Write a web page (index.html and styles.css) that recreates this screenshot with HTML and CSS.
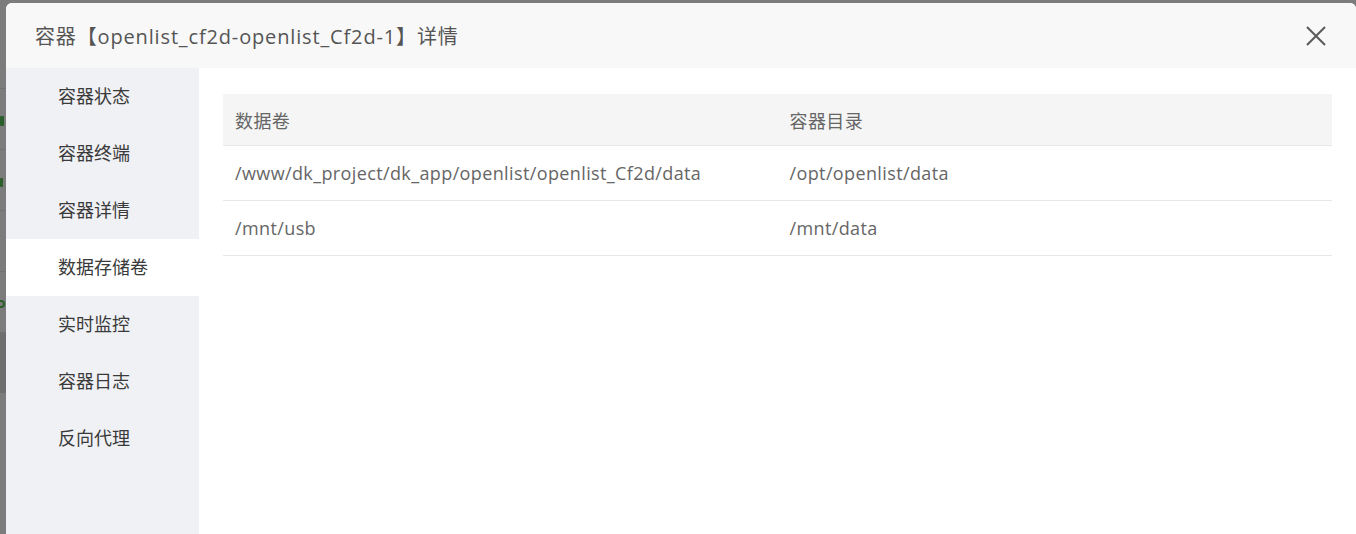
FILE: index.html
```html
<!DOCTYPE html>
<html lang="zh-CN">
<head>
<meta charset="utf-8">
<title>容器详情</title>
<link rel="stylesheet" href="styles.css">
</head>
<body>
<div class="backdrop">
  <div class="bg-row"><span class="bg-mark"></span></div>
  <div class="bg-row"><span class="bg-mark short"></span></div>
  <div class="bg-row"></div>
  <div class="bg-row"><span class="bg-mark round"></span></div>
  <div class="bg-row dark"></div>
</div>
<div class="modal">
  <div class="modal-header">
    <div class="modal-title">容器【openlist_cf2d-openlist_Cf2d-1】详情</div>
    <button class="modal-close" aria-label="关闭">
      <svg width="20" height="20" viewBox="0 0 20 20"><path d="M1 1 L19 19 M19 1 L1 19" stroke="#5a5a5a" stroke-width="2" fill="none"/></svg>
    </button>
  </div>
  <div class="modal-body">
    <ul class="side-menu">
      <li class="menu-item">容器状态</li>
      <li class="menu-item">容器终端</li>
      <li class="menu-item">容器详情</li>
      <li class="menu-item active">数据存储卷</li>
      <li class="menu-item">实时监控</li>
      <li class="menu-item">容器日志</li>
      <li class="menu-item">反向代理</li>
    </ul>
    <div class="content">
      <table class="vol-table">
        <thead>
          <tr><th>数据卷</th><th>容器目录</th></tr>
        </thead>
        <tbody>
          <tr><td>/www/dk_project/dk_app/openlist/openlist_Cf2d/data</td><td>/opt/openlist/data</td></tr>
          <tr><td>/mnt/usb</td><td>/mnt/data</td></tr>
        </tbody>
      </table>
    </div>
  </div>
</div>
</body>
</html>
```

FILE: styles.css
```css
html, body {
  margin: 0;
  padding: 0;
  width: 1356px;
  height: 534px;
  overflow: hidden;
  background: #7c7c7c;
  font-family: "Open Sans", "Noto Sans CJK SC", sans-serif;
}

.backdrop {
  padding-top: 88px;
}

.bg-row {
  height: 60px;
  border-top: 1px solid #727272;
  display: flex;
  align-items: center;
}

.bg-mark {
  display: block;
  width: 4px;
  height: 10px;
  margin-top: 4px;
  background: #2a5e2a;
  border-radius: 1px;
}

.bg-mark.short {
  width: 3px;
  height: 9px;
}

.bg-mark.round {
  width: 5px;
  height: 8px;
  border-radius: 0 4px 4px 0;
  background: transparent;
  border: 2px solid #2a5e2a;
  border-left: 0;
  box-sizing: border-box;
}

.bg-row.dark {
  background: #6e6e6e;
}

.modal {
  position: absolute;
  left: 6px;
  top: 3px;
  width: 1350px;
  height: 540px;
  background: #ffffff;
  border-radius: 6px 6px 0 0;
  overflow: hidden;
  display: flex;
  flex-direction: column;
}

.modal-header {
  height: 65px;
  flex: none;
  background: #f8f8f8;
  display: flex;
  align-items: center;
  justify-content: space-between;
  padding: 0 30px 0 29px;
}

.modal-title {
  font-size: 20px;
  color: #555555;
  letter-spacing: 0.85px;
}

.modal-close {
  border: 0;
  background: none;
  padding: 0;
  width: 20px;
  height: 20px;
  display: flex;
  cursor: pointer;
}

.modal-body {
  flex: 1;
  display: flex;
}

.side-menu {
  list-style: none;
  margin: 0;
  padding: 0;
  width: 193px;
  flex: none;
  background: #f0f1f5;
}

.menu-item {
  height: 57px;
  line-height: 57px;
  padding-left: 52px;
  font-size: 18px;
  color: #3a3a3a;
}

.menu-item.active {
  background: #ffffff;
}

.content {
  flex: 1;
  padding: 26px 18px 0 24px;
}

.vol-table {
  width: 1109px;
  border-collapse: collapse;
  table-layout: fixed;
  font-size: 18px;
  color: #666666;
  letter-spacing: 0.38px;
}

.vol-table th,
.vol-table td {
  text-align: left;
  font-weight: normal;
  padding: 0 12px;
  border-bottom: 1px solid #e8e8e8;
}

.vol-table th {
  height: 51px;
  background: #f5f5f5;
}

.vol-table td {
  height: 54px;
}
```
